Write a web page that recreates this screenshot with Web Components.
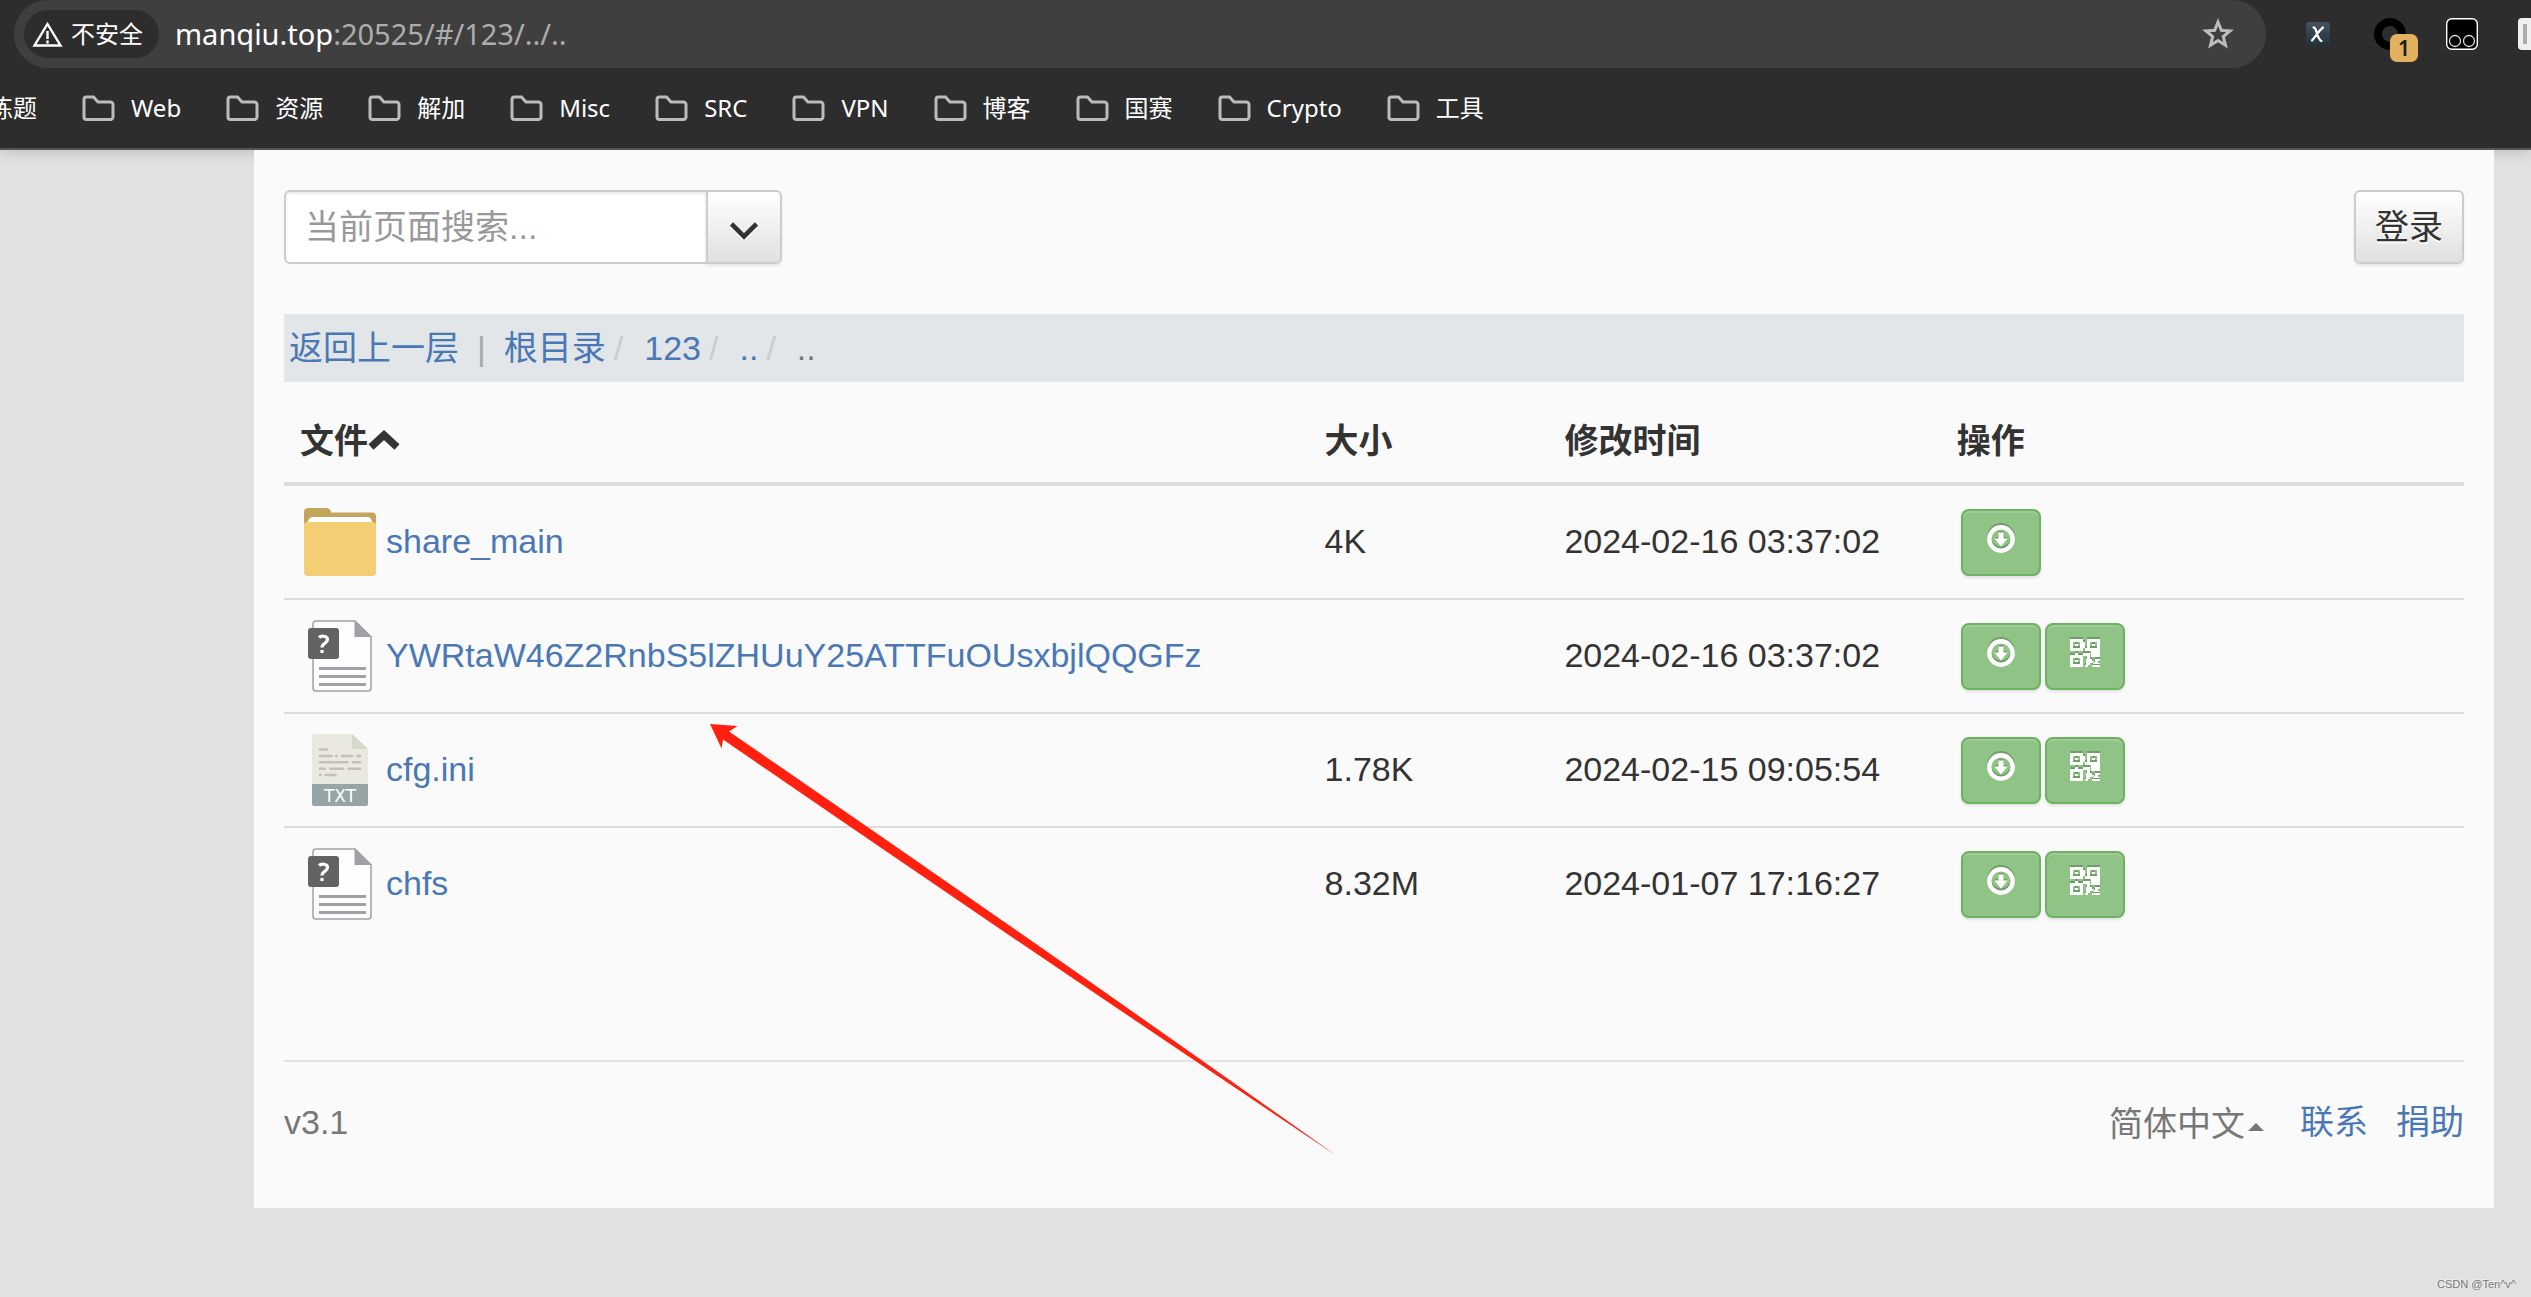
<!DOCTYPE html>
<html lang="zh-CN">
<head>
<meta charset="utf-8">
<title>share</title>
<style>
  html, body { margin: 0; min-height: 100%; }
  body {
    background: #e1e1e1; color: #333;
    font-family: "Liberation Sans", "Noto Sans CJK SC", sans-serif;
    font-size: 34px; line-height: 48px;
    position: relative; min-height: 100vh; overflow: hidden;
  }
</style>
</head>
<body>
<browser-bar>
  <bookmark-item plain>练题</bookmark-item>
  <bookmark-item>Web</bookmark-item>
  <bookmark-item>资源</bookmark-item>
  <bookmark-item>解加</bookmark-item>
  <bookmark-item>Misc</bookmark-item>
  <bookmark-item>SRC</bookmark-item>
  <bookmark-item>VPN</bookmark-item>
  <bookmark-item>博客</bookmark-item>
  <bookmark-item>国赛</bookmark-item>
  <bookmark-item>Crypto</bookmark-item>
  <bookmark-item>工具</bookmark-item>
</browser-bar>
<page-panel>
  <search-bar></search-bar>
  <path-crumbs></path-crumbs>
  <file-table></file-table>
  <page-footer></page-footer>
</page-panel>
<pointer-arrow></pointer-arrow>
<water-mark>CSDN @Ten^v^</water-mark>

<script>
const define = (name, html, setup) => customElements.define(name, class extends HTMLElement {
  constructor() {
    super();
    const t = document.createElement('template');
    t.innerHTML = html;
    this.attachShadow({ mode: 'open' }).append(t.content.cloneNode(true));
    if (setup) setup(this);
  }
});

define('bookmark-item', `
<style>
  :host { display: block; flex: none; }
  a { display: flex; align-items: center; gap: 16px; color: #fff; text-decoration: none; white-space: nowrap; }
  svg { width: 33px; height: 26px; flex: none; }
  :host([plain]) svg { display: none; }
</style>
<a href="#"><svg viewBox="0 0 33 26" fill="none" stroke="#bcbcbc" stroke-width="3"><path d="M4 2h7.500l4.500 5H28.500a2.500 2.500 0 0 1 2.500 2.500V22a2.500 2.500 0 0 1-2.500 2.500H4.500A2.500 2.500 0 0 1 2 22V4.500A2.500 2.500 0 0 1 4 2z"/></svg><span><slot></slot></span></a>`);

define('browser-bar', `
<style>
  :host { display: block; background: #2d2d2d; border-bottom: 2px solid #555; font-family: "Noto Sans", "Noto Sans CJK SC", sans-serif; color: #fff; box-shadow: 0 0 16px rgba(0,0,0,.2); }
  .top { display: flex; align-items: center; height: 68px; padding-left: 14px; overflow: hidden; }
  .address { flex: 1; display: flex; align-items: center; height: 68px; box-sizing: border-box; background: #3f3f3f; border-radius: 34px; padding: 0 31px 0 10px; }
  .chip { display: flex; align-items: center; gap: 8px; height: 48px; padding: 0 16px 0 8px; border: 0; border-radius: 24px; background: #2d2d2d; color: #fff; font: inherit; font-size: 24px; line-height: 32px; }
  .chip svg { width: 31px; height: 26px; }
  .url { flex: 1; margin-left: 16px; font-size: 29px; line-height: 40px; }
  .url span { color: #adadad; }
  button { border: 0; padding: 0; background: none; display: block; }
  .star, .star svg { width: 34px; height: 34px; display: block; }
  .ext { display: flex; align-items: center; gap: 40px; margin-left: 36px; flex: none; }
  .ext button { width: 32px; height: 32px; position: relative; flex: none; }
  .ext svg { display: block; width: 32px; height: 32px; }
  .badge { position: absolute; left: 16px; top: 16px; width: 28px; height: 28px; border-radius: 7px; background: #e3b05f; color: #1c1c1c; font: 600 21px/28px "Noto Sans", sans-serif; text-align: center; }
  .ext .last { width: 13px; overflow: hidden; }
  nav { display: flex; align-items: center; gap: 45px; height: 80px; margin-left: -11px; overflow: hidden; font-size: 24px; line-height: 32px; }
</style>
<div class="top">
  <div class="address">
    <button class="chip"><svg viewBox="0 0 31 26" fill="none" stroke="#fff" stroke-width="2.400"><path d="M15.500 3 28.500 24.500H2.500z"/><path d="M15.500 10v8M15.500 19.500v3"/></svg><span>不安全</span></button>
    <div class="url">manqiu.top<span>:20525/#/123/../..</span></div>
    <button class="star" aria-label="star"><svg viewBox="0 0 34 34" fill="none" stroke="#bcbcbc" stroke-width="3"><path d="M17 5 20.300 13.300 29 13.900 22.300 19.500 24.500 28.300 17 23.500 9.500 28.300 11.700 19.500 5 13.900 13.700 13.300z"/></svg></button>
  </div>
  <div class="ext">
    <button aria-label="x"><svg viewBox="0 0 32 32"><defs><linearGradient id="g" x2="0" y2="1"><stop stop-color="#44535e"/><stop offset="1" stop-color="#22303a"/></linearGradient></defs><rect x="4" y="4" width="24" height="24" rx="3" fill="url(#g)"/><path d="M11.500 9.500c3-1 3.500 12 8 13.500M21 9.500c-3 2-7 8-11 13" fill="none" stroke="#fff" stroke-width="2.200" stroke-linecap="round"/></svg></button>
    <button aria-label="ring"><svg viewBox="0 0 32 32"><circle cx="16" cy="16" r="12" fill="none" stroke="#000" stroke-width="8"/></svg><span class="badge">1</span></button>
    <button aria-label="script"><svg viewBox="0 0 32 32"><rect x=".7" y=".7" width="30.600" height="30.600" rx="5" fill="#000" stroke="#fff" stroke-width="1.400"/><g fill="none" stroke="#ddd" stroke-width="1.300"><circle cx="9" cy="23" r="5.500"/><circle cx="23" cy="23" r="5.500"/></g></svg></button>
    <button class="last" aria-label="more"><svg viewBox="0 0 32 32"><rect width="32" height="32" rx="4" fill="#f0f0f0"/><path d="M7 6v20" stroke="#aaa" stroke-width="4"/></svg></button>
  </div>
</div>
<nav><slot></slot></nav>`);

define('page-panel', `
<style>
  :host { display: block; position: relative; background: #fafafa; margin: 0 37px 0 254px; padding: 40px 30px 60px; }
</style><slot></slot>`);

define('search-bar', `
<style>
  :host { display: flex; justify-content: space-between; }
  .group { display: flex; }
  input, button { font: inherit; height: 74px; box-sizing: border-box; border: 2px solid #ccc; margin: 0; color: #333; }
  input { width: 424px; padding: 0 19px; background: #fff; border-radius: 6px 0 0 6px; box-shadow: inset 0 2px 3px rgba(0,0,0,.08); }
  input::placeholder { color: #999; opacity: 1; }
  button { background: linear-gradient(#fff, #e0e0e0); border-radius: 6px; box-shadow: 0 2px 3px rgba(0,0,0,.08); text-shadow: 0 2px 0 #fff; padding: 0 19px; }
  .drop { width: 76px; margin-left: -2px; border-radius: 0 6px 6px 0; display: flex; align-items: center; justify-content: center; padding: 10px 0 0; }
  svg { width: 28px; height: 20px; }
</style>
<div class="group">
  <input type="text" placeholder="当前页面搜索..." aria-label="当前页面搜索">
  <button class="drop" aria-label="search options"><svg viewBox="0 0 28 20"><path d="M2 4 14 16 26 4" fill="none" stroke="#fff" stroke-width="5"/><path d="M1.500 2 14 14.500 26.500 2" fill="none" stroke="#333" stroke-width="4.600"/></svg></button>
</div>
<button>登录</button>`);

define('path-crumbs', `
<style>
  :host { display: flex; margin-top: 50px; height: 68px; padding: 0 5px; align-items: center; background: #e2e6e9; white-space: nowrap; }
  a { color: #4a78b5; text-decoration: none; }
  .bar { color: #aaa; margin: 0 18px; }
  .sep { color: #ccc; margin: 0 21px 0 8px; }
  .now { color: #777; }
</style>
<a href="#">返回上一层</a><span class="bar">|</span><a href="#">根目录</a><span class="sep">/</span><a href="#">123</a><span class="sep">/</span><a href="#">..</a><span class="sep">/</span><span class="now">..</span>`);

const unknownFile = `<svg viewBox="0 0 72 72"><path d="M12 1H51L67 17V68a3 3 0 0 1-3 3H12a3 3 0 0 1-3-3V4a3 3 0 0 1 3-3z" fill="#fdfdfd" stroke="#a0a1a7" stroke-width="1.500"/><path d="M50.500 0 68 17H50.500z" fill="#a0a1a7"/><path d="M15 48.500H62M15 56.500H62M15 64.500H62" stroke="#a0a1a7" stroke-width="3"/><rect x="4" y="8" width="31" height="31" rx="3" fill="#636363"/><path d="M15 17.500c1.500-1.500 8.500-2.500 8.500 2 0 4-5.500 3.500-5.500 8M18 30v3" fill="none" stroke="#fff" stroke-width="3.200"/></svg>`;
const icons = {
  folder: `<svg viewBox="0 0 72 72"><path d="M0 6a4 4 0 0 1 4-4H22c3 0 5 2 5 4.500H68a4 4 0 0 1 4 4V30H0z" fill="#c4a55c"/><path d="M4 20v-4a5 5 0 0 1 5-5H63a5 5 0 0 1 5 5v4z" fill="#fff"/><path d="M0 19a3 3 0 0 1 3-3H69a3 3 0 0 1 3 3V66a4 4 0 0 1-4 4H4a4 4 0 0 1-4-4z" fill="#f3ce75"/></svg>`,
  unknown: unknownFile,
  txt: `<svg viewBox="0 0 72 72"><path d="M10 0H48L64 15V52H8V2a2 2 0 0 1 2-2z" fill="#e9e9e0"/><path d="M48 0 64 15H48z" fill="#d9d7ca"/><path d="M8 50H64V70a2 2 0 0 1-2 2H10a2 2 0 0 1-2-2z" fill="#95a5a5"/><path d="M16 15.500h7M16 22h11.500M32 22h.500M38 22h10M53.500 22h2.500M16 28.300h27.500M49 28.300h7M16 34.700h5M26.500 34.700h12.500M44.500 34.700h11.500M16 41h.500M21.500 41h10" stroke="#c8bdb8" stroke-width="2.600" stroke-linecap="round"/><text x="36" y="68" text-anchor="middle" fill="#fff" font-family="DejaVu Sans" font-size="17">TXT</text></svg>`
};
const down = `<button aria-label="download"><svg viewBox="0 0 28 28"><g transform="translate(0 -2)" stroke="#6f9c68" fill="#6f9c68"><circle cx="14" cy="14" r="11.700" fill="none" stroke-width="4.400"/><path d="M11.500 8h5v6h4L14 21 7.500 14h4z" stroke="none"/></g><circle cx="14" cy="14" r="11.700" fill="none" stroke="#fff" stroke-width="4.400"/><path d="M11.500 7.500h5v6h4L14 21.500 7.500 13.500h4z" fill="#fff"/></svg></button>`;
const qrPath = 'M0 0H13V12H0zM3 3V9H10V3zM5 5H8V7H5zM17 0H30V12H17zM20 3V9H27V3zM22 5H25V7H22zM0 16H13V28H0zM3 19V25H10V19zM5 21H8V23H5zM13 3H15V9H13zM5 14H8V16H5zM13 14H20V20H17V17H13zM15 9H17V12H15zM21 12H30V18H21zM16 20H22V22H24V24H20V26H16zM25 20H30V22H28V24H30V25H23V23H25zM15 26H18V28H15zM22 26H30V28H22z';
const qr = `<button aria-label="qrcode"><svg class="qr" viewBox="0 0 30 28" fill-rule="evenodd" shape-rendering="crispEdges"><path transform="translate(0 -2)" fill="#6f9c68" d="${qrPath}"/><path fill="#fff" d="${qrPath}"/></svg></button>`;

const files = [
  ['folder', 'share_main', '4K', '2024-02-16 03:37:02', false],
  ['unknown', 'YWRtaW46Z2RnbS5lZHUuY25ATTFuOUsxbjlQQGFz', '', '2024-02-16 03:37:02', true],
  ['txt', 'cfg.ini', '1.78K', '2024-02-15 09:05:54', true],
  ['unknown', 'chfs', '8.32M', '2024-01-07 17:16:27', true]
];

define('file-table', `
<style>
  :host { display: block; }
  table { width: 100%; table-layout: fixed; border-collapse: separate; border-spacing: 0; }
  th, td { padding: 0 16px; text-align: left; box-sizing: border-box; white-space: nowrap; }
  th { height: 104px; border-bottom: 4px solid #ddd; padding-top: 18px; }
  td { height: 114px; border-bottom: 2px solid #ddd; }
  tr:last-child td { height: 112px; border-bottom: 0; }
  th svg { width: 32px; height: 22px; vertical-align: 2px; }
  .text { padding-bottom: 3px; }
  .file { display: flex; align-items: center; gap: 10px; padding-left: 4px; }
  .file svg { width: 72px; height: 72px; flex: none; overflow: visible; }
  .file a { color: #4a78b5; text-decoration: none; padding-bottom: 3px; }
  .ops { display: flex; gap: 4px; padding-left: 4px; }
  button { width: 80px; height: 67px; box-sizing: border-box; display: flex; align-items: center; justify-content: center; padding: 0 0 6px; border: 2px solid #6db161; border-radius: 8px; background: #90c486; box-shadow: inset 0 2px 0 rgba(255,255,255,.15), 0 2px 3px rgba(0,0,0,.1); }
  button svg { width: 28px; height: 28px; overflow: visible; flex: none; }
  button .qr { width: 30px; }
</style>
<table>
  <colgroup><col style="width:47%"><col style="width:11%"><col style="width:18%"><col style="width:24%"></colgroup>
  <thead><tr><th>文件<svg viewBox="0 0 32 22"><path d="M3 18 16 6 29 18" fill="none" stroke="#333" stroke-width="7.500"/></svg></th><th>大小</th><th>修改时间</th><th>操作</th></tr></thead>
  <tbody>${files.map(([i, n, s, d, q]) => `<tr><td><div class="file">${icons[i]}<a href="#">${n}</a></div></td><td class="text">${s}</td><td class="text">${d}</td><td><div class="ops">${down}${q ? qr : ''}</div></td></tr>`).join('')}</tbody>
</table>`);

define('page-footer', `
<style>
  :host { display: flex; align-items: center; justify-content: space-between; margin-top: 120px; border-top: 2px solid #e3e3e3; padding-top: 34px; color: #777; }
  .links { display: flex; align-items: center; gap: 28px; }
  a { color: #4a78b5; text-decoration: none; }
  button { font: inherit; color: #777; border: 0; background: none; padding: 0; margin: 4px 8px 0 0; display: flex; align-items: center; gap: 3px; }
  svg { width: 16px; height: 8px; margin-top: 6px; }
</style>
<span>v3.1</span>
<div class="links"><button>简体中文<svg viewBox="0 0 16 8"><path d="M0 8 8 0l8 8z" fill="#777"/></svg></button><a href="#">联系</a><a href="#">捐助</a></div>`);

define('pointer-arrow', `
<style>
  :host { position: absolute; left: 710px; top: 724px; width: 628px; height: 434px; pointer-events: none; }
  svg { display: block; width: 100%; height: 100%; }
</style>
<svg viewBox="0 0 628 434"><path d="M0 0 27.500 2 19 7.500 Q330 221 627 432 Q310 220 13 15.500L11.500 24.500z" fill="#ff2010"/></svg>`);

define('water-mark', `
<style>
  :host { position: absolute; right: 15px; bottom: 5px; font-size: 11px; line-height: 16px; color: #777; text-shadow: -1px -1px 0 #f4f4f4; }
</style><slot></slot>`);
</script>
</body>
</html>
